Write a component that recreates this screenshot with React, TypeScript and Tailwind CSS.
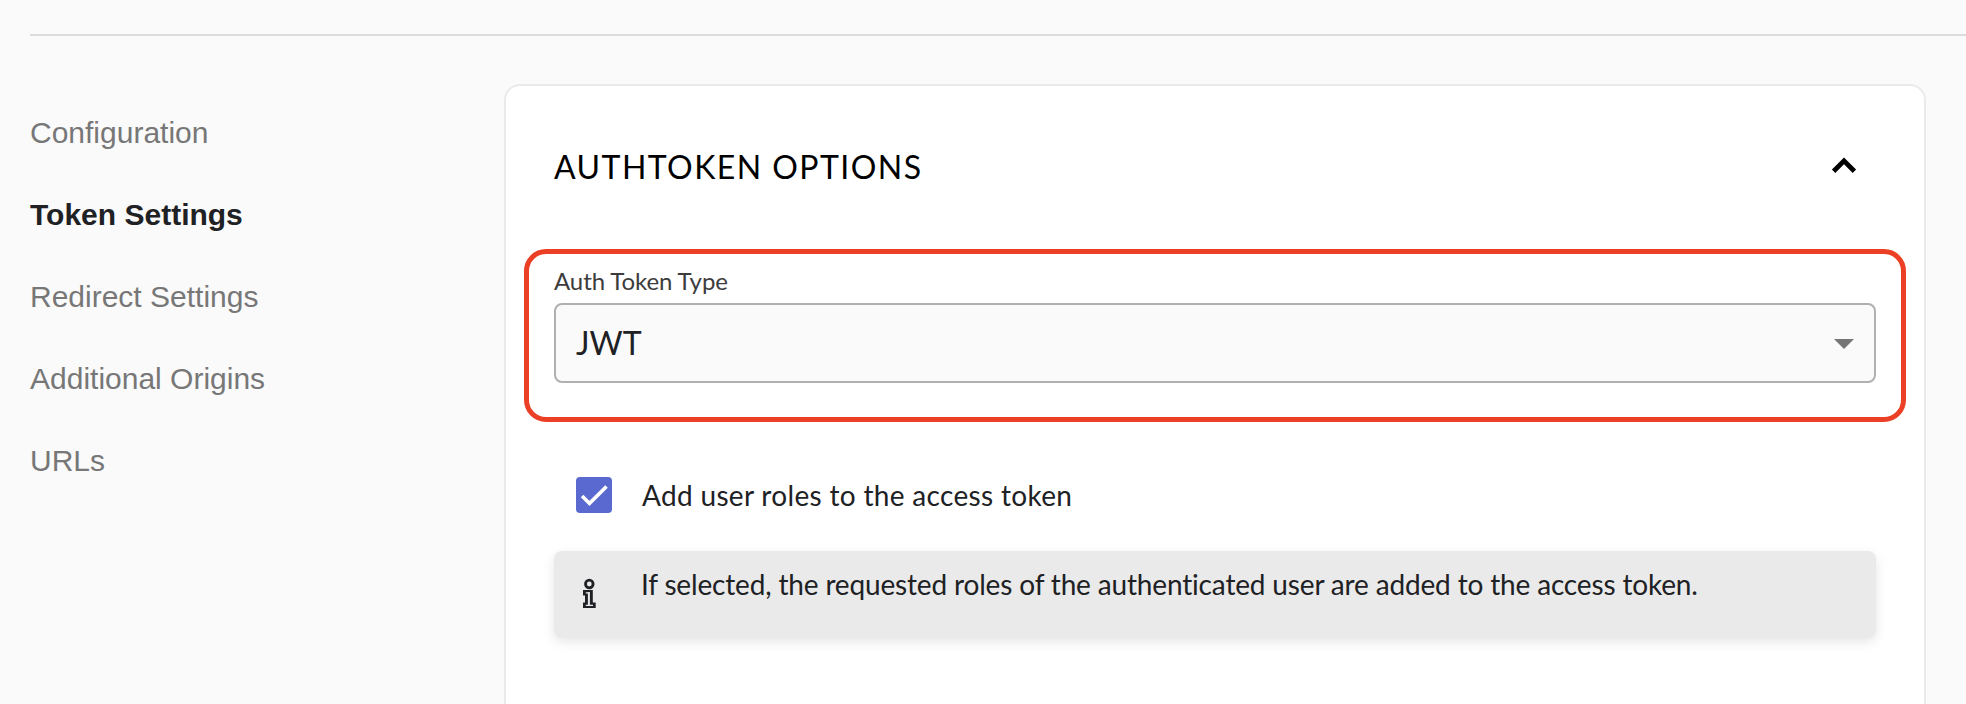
import React from "react";

const navItems = [
  { label: "Configuration", active: false },
  { label: "Token Settings", active: true },
  { label: "Redirect Settings", active: false },
  { label: "Additional Origins", active: false },
  { label: "URLs", active: false },
];

function Sidebar() {
  return (
    <nav className="w-[474px] shrink-0 pt-[7px] font-['Liberation_Sans',Arial,sans-serif] text-[30px]">
      {navItems.map((item) => (
        <a
          key={item.label}
          className={
            item.active
              ? "flex h-[82px] items-center whitespace-nowrap font-bold text-[#202124]"
              : "flex h-[82px] items-center whitespace-nowrap text-[#777777]"
          }
        >
          {item.label}
        </a>
      ))}
    </nav>
  );
}

function TokenTypeField() {
  return (
    <div className="mx-[18px] h-[173px] rounded-[22px] border-5 border-[#eb4025] px-[25px] pt-[9px]">
      <label className="flex h-[40px] items-center pb-[4px] text-[24px] tracking-[-0.09px] text-[#3c3c3c]">
        Auth Token Type
      </label>
      <div className="flex h-[80px] items-center justify-between rounded-[8px] border-2 border-[#b0b0b0] bg-[#fafafa] pr-[6px] pl-[20px]">
        <span className="text-[32px] text-[#202124]">JWT</span>
        <svg viewBox="0 0 24 24" className="size-[48px] fill-[#757575]">
          <path d="M7 10l5 5 5-5z" />
        </svg>
      </div>
    </div>
  );
}

function InfoIcon() {
  return (
    <svg viewBox="0 0 14 32" className="mt-[27px] h-[32px] w-[14px]" fill="none">
      <circle cx="7.3" cy="6" r="3.8" stroke="#202124" strokeWidth="2.8" />
      <path d="M1 12h9.8v12.6h2.9V30H1v-5.4h2v-7H1z" fill="#202124" />
      <path d="M3.8 14.8h4M3.8 27.4h7.2" stroke="#eaeaea" strokeWidth="1.2" />
      <path d="M6.9 14.2V28" stroke="#eaeaea" strokeWidth="2" />
    </svg>
  );
}

export default function App() {
  return (
    <div className="h-[704px] w-[1966px] overflow-hidden bg-[#fafafa] pt-[34px] pl-[30px] font-[Lato,sans-serif] text-[#202124]">
      <div className="h-[2px] bg-[#dcdcdc]" />
      <div className="flex pt-[48px]">
        <Sidebar />
        <section className="h-[700px] w-[1422px] rounded-[16px] border-2 border-[#eaeaea] bg-white">
          <header className="flex h-[163px] items-center justify-between pr-[56px] pb-[1px] pl-[48px]">
            <h2 className="text-[32px] tracking-[1.45px] text-black">AUTHTOKEN OPTIONS</h2>
            <svg viewBox="0 0 48 48" className="size-[48px]" fill="none" stroke="black" strokeWidth="4.8">
              <path d="M13.6 28.2L24 17.8l10.4 10.4" />
            </svg>
          </header>
          <TokenTypeField />
          <label className="flex h-[129px] items-center gap-[30px] pt-[17px] pl-[70px] text-[28px]">
            <span className="flex size-[36px] items-center justify-center rounded-[4px] bg-[#5969cf]">
              <svg viewBox="0 0 36 36" className="size-[36px]" fill="none" stroke="white" strokeWidth="3.6">
                <path d="M6.1 19l7.4 7.4L30.5 9.5" />
              </svg>
            </span>
            <span className="tracking-[0.32px]">Add user roles to the access token</span>
          </label>
          <div className="mx-[48px] flex h-[87px] rounded-[8px] bg-[#eaeaea] pl-[28px] shadow-[0_4px_12px_rgba(0,0,0,0.1)]">
            <InfoIcon />
            <p className="ml-[45px] pt-[16px] text-[28px] leading-[34px] tracking-[-0.16px] whitespace-nowrap">
              If selected, the requested roles of the authenticated user are added to the access token.
            </p>
          </div>
        </section>
      </div>
    </div>
  );
}
